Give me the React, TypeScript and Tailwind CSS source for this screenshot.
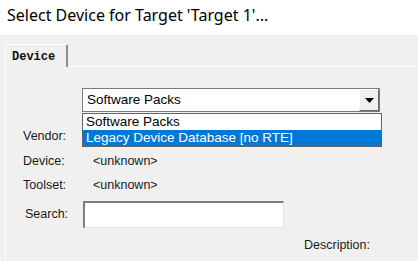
import React from 'react';

const labelFont = { fontFamily: '"Liberation Sans", Arial, sans-serif' };

export default function App() {
  return (
    <div className="w-[418px] h-[261px] overflow-hidden bg-[#f0f0f0] relative" style={labelFont}>
      {/* Title */}
      <div className="h-[35px] bg-white pl-[7px] pt-[5px] text-[16px] text-black leading-[20px]" style={{ fontFamily: '"Noto Sans", "Open Sans", sans-serif' }}>
        Select Device for Target 'Target 1'...
      </div>

      {/* Tab strip */}
      <div className="pt-[9px] pl-[5px] flex items-end">
        <div className="h-[23px] w-[63px] border-t border-l border-t-white border-l-white border-r-2 border-r-[#8c8c8c] rounded-tr-[2px] pl-[6px] pt-[3px] text-[12px] font-bold text-[#111]" style={{ fontFamily: '"Liberation Mono", "DejaVu Sans Mono", monospace' }}>
          Device
        </div>
        <div className="flex-1 border-b border-white" />
      </div>

      {/* Panel */}
      <div className="relative ml-[5px] pt-[21px] border-l border-white h-[200px] text-[12.5px] text-[#1a1a1a]">
        {/* Select */}
        <div className="ml-[76px] w-[298px] h-[24px] bg-white border border-[#7a7a7a] flex items-center">
          <span className="flex-1 pl-[4px] text-[13.5px] text-black">Software Packs</span>
          <div className="w-[20px] h-[22px] bg-[#f0f0f0] border-t border-l border-white border-r border-b border-r-[#696969] border-b-[#696969] flex items-center justify-center">
            <svg width="9" height="5" viewBox="0 0 9 5"><path d="M0 0h9L4.5 5z" fill="#000" /></svg>
          </div>
        </div>

        {/* Rows */}
        <div className="mt-[12px] h-[24px] flex items-center pl-[17px]">
          <span className="w-[70px]">Vendor:</span>
          <span></span>
        </div>
        <div className="h-[24px] flex items-center pl-[17px] pt-[2px]">
          <span className="w-[70px]">Device:</span>
          <span>&lt;unknown&gt;</span>
        </div>
        <div className="h-[24px] flex items-center pl-[17px] pt-[2px]">
          <span className="w-[70px]">Toolset:</span>
          <span>&lt;unknown&gt;</span>
        </div>
        <div className="mt-[5px] h-[27px] flex items-center pl-[19px]">
          <span className="w-[58px]">Search:</span>
          <div className="w-[201px] h-[27px] bg-white border-t-2 border-l-2 border-t-[#7d7d7d] border-l-[#7d7d7d] border-r border-b border-r-[#e3e3e3] border-b-[#e3e3e3]" />
        </div>
        <div className="mt-[8px] pl-[298px]">Description:</div>

        {/* Open dropdown list */}
        <div className="absolute left-[76px] top-[46px] w-[300px] h-[34px] bg-white border border-[#646464] text-[13.5px]">
          <div className="h-[16px] leading-[16px] pl-[3px] text-black">Software Packs</div>
          <div className="h-[16px] leading-[16px] pl-[3px] bg-[#0078d7] text-white">Legacy Device Database [no RTE]</div>
        </div>
      </div>
    </div>
  );
}
